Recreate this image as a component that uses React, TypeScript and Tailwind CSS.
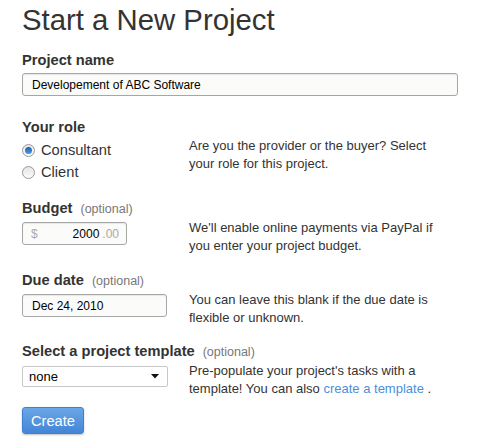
import React from "react";

const font = { fontFamily: '"Liberation Sans", Arial, Helvetica, sans-serif' };

function Radio({ checked }: { checked: boolean }) {
  return (
    <span className="relative inline-flex h-[13px] w-[13px] shrink-0 items-center justify-center rounded-full border border-[#9a9a9a] bg-gradient-to-b from-[#e6e6e6] to-[#fbfbfb]">
      {checked && (
        <span className="h-[7px] w-[7px] rounded-full bg-gradient-to-b from-[#1f5fa8] to-[#4a9be6]" />
      )}
    </span>
  );
}

function Label({ text, optional }: { text: string; optional?: boolean }) {
  return (
    <div className="flex items-baseline text-[14.67px] font-bold leading-[18px] text-[#333]">
      <span>{text}</span>
      {optional && (
        <span className="ml-[8px] text-[12.5px] font-normal text-[#777]">(optional)</span>
      )}
    </div>
  );
}

function Help({ children, mt }: { children: React.ReactNode; mt: string }) {
  return (
    <div className={`w-[252px] text-[13px] leading-[18px] text-[#333] ${mt}`}>{children}</div>
  );
}

const inputCls =
  "h-[23px] rounded-[3px] border border-[#a6a6a6] bg-[#fbfbf9] shadow-[inset_0_1px_1px_rgba(0,0,0,0.08)] flex items-center text-[12px] text-black";

export default function App() {
  return (
    <div style={font} className="min-h-[444px] w-[479px] bg-white pl-[22px] pt-[2px]">
      <h1 className="text-[29.33px] font-normal leading-[36px] text-[#333]">Start a New Project</h1>

      <div className="mt-[13px]">
        <Label text="Project name" />
      </div>
      <div className={`mt-[4px] w-[436px] pl-[9px] ${inputCls}`}>Developement of ABC Software</div>

      <div className="mt-[22px]">
        <Label text="Your role" />
      </div>
      <div className="mt-[3px] flex">
        <div className="w-[167px]">
          <div className="flex h-[22px] items-center gap-[6px] text-[14.67px] text-[#333]">
            <Radio checked />
            <span>Consultant</span>
          </div>
          <div className="flex h-[22px] items-center gap-[6px] text-[14.67px] text-[#333]">
            <Radio checked={false} />
            <span>Client</span>
          </div>
        </div>
        <Help mt="-mt-[2px]">Are you the provider or the buyer? Select your role for this project.</Help>
      </div>

      <div className="mt-[16px]">
        <Label text="Budget" optional />
      </div>
      <div className="mt-[4px] flex">
        <div className="w-[167px]">
          <div className={`w-[105px] pl-[8px] pr-[7px] ${inputCls}`}>
            <span className="text-[#aaa]">$</span>
            <span className="ml-auto">2000</span>
            <span className="ml-[3px] text-[#aaa]">.00</span>
          </div>
        </div>
        <Help mt="-mt-[3px]">We'll enable online payments via PayPal if you enter your project budget.</Help>
      </div>

      <div className="mt-[16px]">
        <Label text="Due date" optional />
      </div>
      <div className="mt-[4px] flex">
        <div className="w-[167px]">
          <div className={`w-[145px] pl-[9px] ${inputCls}`}>Dec 24, 2010</div>
        </div>
        <Help mt="-mt-[3px]">You can leave this blank if the due date is flexible or unknown.</Help>
      </div>

      <div className="mt-[15px]">
        <Label text="Select a project template" optional />
      </div>
      <div className="mt-[5px] flex">
        <div className="w-[167px]">
          <div className="flex h-[21px] w-[146px] items-center rounded-[2px] border border-[#c8c8c8] bg-white pl-[6px] pr-[8px] text-[13px] text-black">
            <span>none</span>
            <svg className="ml-auto" width="8" height="5" viewBox="0 0 8 5">
              <path d="M0 0 L8 0 L4 4.5 Z" fill="#111" />
            </svg>
          </div>
        </div>
        <Help mt="-mt-[4px]">
          <div>Pre-populate your project's tasks with a</div>
          <div className="flex">
            <span className="whitespace-pre">template! You can also </span>
            <span className="text-[#4a8fd9]">create a template</span>
            <span className="whitespace-pre"> .</span>
          </div>
        </Help>
      </div>

      <div className="mt-[9px]">
        <button className="h-[27px] w-[62px] rounded-[3px] border border-[#3f80cf] bg-gradient-to-b from-[#6aa7e6] to-[#4385d7] text-[14.67px] text-white shadow-[0_1px_2px_rgba(0,0,0,0.25)]">
          Create
        </button>
      </div>
    </div>
  );
}
